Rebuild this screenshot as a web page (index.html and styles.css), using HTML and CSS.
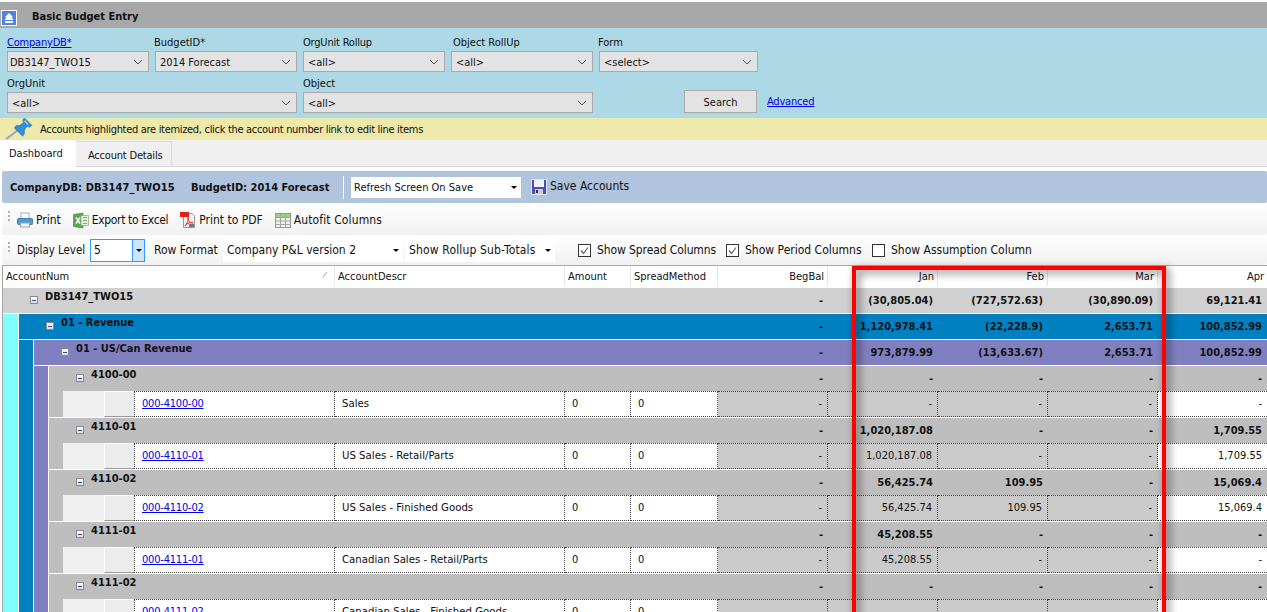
FILE: index.html
```html
<!DOCTYPE html>
<html lang="en">
<head>
<meta charset="utf-8">
<title>Basic Budget Entry</title>
<link rel="stylesheet" href="styles.css">
</head>
<body>
<div class="page">
  <header class="title-bar">
    <svg class="collapse-icon" width="16" height="16" viewBox="0 0 16 16"><rect x="0.5" y="0.5" width="15" height="15" fill="#4f83e3" stroke="#fff"/><path d="M8 3 L12 7 H10.5 L12.5 10 H3.5 L5.5 7 H4 Z M4 11 H12 V13 H4 Z" fill="#fff"/></svg>
    <h1 class="title">Basic Budget Entry</h1>
  </header>

  <section class="filters">
    <div class="field"><a class="field-label link tight" href="#">CompanyDB*</a><div class="select sel-first"><span>DB3147_TWO15</span><svg class="chev" width="10" height="6" viewBox="0 0 10 6"><path d="M1 1 L5 5 L9 1" fill="none" stroke="#555"/></svg></div></div>
    <div class="field"><span class="field-label lab-budget">BudgetID*</span><div class="select"><span>2014 Forecast</span><svg class="chev" width="10" height="6" viewBox="0 0 10 6"><path d="M1 1 L5 5 L9 1" fill="none" stroke="#555"/></svg></div></div>
    <div class="field"><span class="field-label tight">OrgUnit Rollup</span><div class="select"><span>&lt;all&gt;</span><svg class="chev" width="10" height="6" viewBox="0 0 10 6"><path d="M1 1 L5 5 L9 1" fill="none" stroke="#555"/></svg></div></div>
    <div class="field"><span class="field-label lab-object">Object RollUp</span><div class="select"><span>&lt;all&gt;</span><svg class="chev" width="10" height="6" viewBox="0 0 10 6"><path d="M1 1 L5 5 L9 1" fill="none" stroke="#555"/></svg></div></div>
    <div class="field"><span class="field-label lab-budget">Form</span><div class="select"><span>&lt;select&gt;</span><svg class="chev" width="10" height="6" viewBox="0 0 10 6"><path d="M1 1 L5 5 L9 1" fill="none" stroke="#555"/></svg></div></div>
    <div class="field span-2"><span class="field-label">OrgUnit</span><div class="select"><span>&lt;all&gt;</span><svg class="chev" width="10" height="6" viewBox="0 0 10 6"><path d="M1 1 L5 5 L9 1" fill="none" stroke="#555"/></svg></div></div>
    <div class="field span-2"><span class="field-label">Object</span><div class="select"><span>&lt;all&gt;</span><svg class="chev" width="10" height="6" viewBox="0 0 10 6"><path d="M1 1 L5 5 L9 1" fill="none" stroke="#555"/></svg></div></div>
    <div class="search-area"><button class="search-btn" type="button">Search</button><a class="link tight" href="#">Advanced</a></div>
  </section>

  <div class="notice">
    <svg class="pin" width="30" height="22" viewBox="0 0 30 24"><path d="M1 23 L14 13" stroke="#9aa4b0" stroke-width="2"/><path d="M10 11 L19 20 L21 17 C20 15 21 12 24 9 L27 10 L29 8 L21 0 L19 2 L20 5 C17 8 14 9 12 8 Z" fill="#2f8fd8" stroke="#1a6db0" stroke-width=".6"/><path d="M21 3 L25 7" stroke="#a9dcff" stroke-width="1.5"/></svg>
    <span>Accounts highlighted are itemized, click the account number link to edit line items</span>
  </div>

  <nav class="tabs">
    <span class="tab tab-active">Dashboard</span>
    <span class="tab">Account Details</span>
  </nav>

  <div class="context-bar">
    <strong class="ctx-company">CompanyDB: DB3147_TWO15</strong>
    <strong class="ctx-budget">BudgetID: 2014 Forecast</strong>
    <span class="ctx-sep"></span>
    <div class="ctx-select"><span>Refresh Screen On Save</span><i class="caret"></i></div>
    <svg class="save-icon" width="16" height="16" viewBox="0 0 16 16"><rect x="0.5" y="0.5" width="15" height="15" fill="#4a4fb8" stroke="#dfe6f2"/><rect x="3" y="1" width="10" height="7" fill="#eef2fb"/><rect x="4" y="10" width="8" height="5" fill="#c9cdd8"/><rect x="5" y="11" width="2" height="3" fill="#333"/></svg>
    <span class="save-label">Save Accounts</span>
  </div>

  <div class="toolbar toolbar-actions">
    <i class="grip"></i>
    <svg class="tool-icon i-print" width="16" height="16" viewBox="0 0 16 16"><rect x="4" y="1" width="8" height="6" fill="#fff" stroke="#9fb4c8"/><rect x="0.5" y="6.5" width="15" height="6" rx="1" fill="#4f9bd6" stroke="#3c7fb4"/><rect x="3.5" y="11" width="9" height="4" fill="#eef2f6" stroke="#9aa5ad"/></svg>
    <span class="tool-label">Print</span>
    <svg class="tool-icon i-excel" width="16" height="17" viewBox="0 0 16 16"><path d="M0.5 2 L10 0.5 V15.5 L0.5 14 Z" fill="#5fa354" stroke="#3f7f3a" stroke-width=".6"/><rect x="8" y="3" width="7.5" height="10" fill="#e8f3e4" stroke="#7cae72" stroke-width=".7"/><path d="M10 5 H14 M10 8 H14 M10 11 H14" stroke="#7cae72"/><path d="M3 5 L7 11 M7 5 L3 11" stroke="#fff" stroke-width="1.5"/></svg>
    <span class="tool-label lab-export">Export to Excel</span>
    <svg class="tool-icon i-pdf" width="16" height="16" viewBox="0 0 16 16"><path d="M3.5 1.5 H12 L14.5 4 V15.5 H3.5 Z" fill="#f4f4f4" stroke="#9a9a9a"/><rect x="0" y="0" width="9" height="5" fill="#e0241c"/><path d="M5 14 C8 10 9 6 8 5 C7 6 9 11 13 11 C11 10 7 11 5 14 Z" fill="none" stroke="#d8261c"/><rect x="9" y="12" width="5" height="3" fill="#777"/></svg>
    <span class="tool-label">Print to PDF</span>
    <svg class="tool-icon i-grid" width="16" height="16" viewBox="0 0 16 16"><rect x="0.5" y="1.5" width="15" height="14" fill="#f3f3e6" stroke="#8f9a9f"/><rect x="1" y="2" width="14" height="3" fill="#9bd07a"/><path d="M0.5 5.5 H15.5 M0.5 9 H15.5 M0.5 12.5 H15.5 M5.5 2 V15.5 M10.5 2 V15.5" stroke="#9aa7ad"/></svg>
    <span class="tool-label lab-autofit">Autofit Columns</span>
  </div>

  <div class="toolbar toolbar-options">
    <i class="grip"></i>
    <span class="opt-display">Display Level</span>
    <div class="combo"><span>5</span><b class="combo-btn"><i class="caret"></i></b></div>
    <span class="opt-format">Row Format</span>
    <div class="opt-select format-select"><span>Company P&amp;L version 2</span><i class="caret"></i></div>
    <div class="opt-select rollup-select"><span class="lab-rollup">Show Rollup Sub-Totals</span><i class="caret"></i></div>
    <label class="check check-spread"><svg class="box" width="13" height="13" viewBox="0 0 13 13"><rect x="0.5" y="0.5" width="12" height="12" fill="#fff" stroke="#333"/><path d="M3 6.5 L5.5 9.5 L10 3.5" fill="none" stroke="#666" stroke-width="1.2"/></svg>Show Spread Columns</label>
    <label class="check check-period"><svg class="box" width="13" height="13" viewBox="0 0 13 13"><rect x="0.5" y="0.5" width="12" height="12" fill="#fff" stroke="#333"/><path d="M3 6.5 L5.5 9.5 L10 3.5" fill="none" stroke="#666" stroke-width="1.2"/></svg>Show Period Columns</label>
    <label class="check check-assume"><svg class="box" width="13" height="13" viewBox="0 0 13 13"><rect x="0.5" y="0.5" width="12" height="12" fill="#fff" stroke="#333"/></svg>Show Assumption Column</label>
  </div>

  <section class="grid">
    <div class="head">
      <div class="hcell h-acct">AccountNum<svg class="sort" width="6" height="6" viewBox="0 0 6 6"><path d="M1 6 L5 1" stroke="#999"/></svg></div>
      <div class="hcell c-descr">AccountDescr</div>
      <div class="hcell c-amount">Amount</div>
      <div class="hcell c-spread">SpreadMethod</div>
      <div class="hcell c-num">BegBal</div>
      <div class="hcell c-num">Jan</div>
      <div class="hcell c-num">Feb</div>
      <div class="hcell c-num">Mar</div>
      <div class="hcell c-num c-last">Apr</div>
    </div>

    <div class="row sum root"><div class="label"><i class="tog"></i><b>DB3147_TWO15</b></div><div class="val c-num">-</div><div class="val c-num">(30,805.04)</div><div class="val c-num">(727,572.63)</div><div class="val c-num">(30,890.09)</div><div class="val c-num c-last">69,121.41</div></div>
    <div class="nest nest-cyan">
      <div class="row sum rev"><div class="label"><i class="tog"></i><b>01 - Revenue</b></div><div class="val c-num">-</div><div class="val c-num">1,120,978.41</div><div class="val c-num">(22,228.9)</div><div class="val c-num">2,653.71</div><div class="val c-num c-last">100,852.99</div></div>
      <div class="nest nest-blue">
        <div class="row sum usc"><div class="label"><i class="tog"></i><b>01 - US/Can Revenue</b></div><div class="val c-num">-</div><div class="val c-num">973,879.99</div><div class="val c-num">(13,633.67)</div><div class="val c-num">2,653.71</div><div class="val c-num c-last">100,852.99</div></div>
        <div class="nest nest-purple">
          <div class="rows">
            <div class="row group"><div class="label"><i class="tog"></i><b>4100-00</b></div><div class="val c-num">-</div><div class="val c-num">-</div><div class="val c-num">-</div><div class="val c-num">-</div><div class="val c-num c-last">-</div></div>
            <div class="row detail"><i class="stub"></i><i class="ind1"></i><i class="ind2"></i><div class="cell c-link"><a href="#">000-4100-00</a></div><div class="cell c-descr">Sales</div><div class="cell c-amount">0</div><div class="cell c-spread">0</div><div class="cell c-num dim">-</div><div class="cell c-num dim">-</div><div class="cell c-num dim">-</div><div class="cell c-num dim">-</div><div class="cell c-num c-last">-</div></div>

            <div class="row group"><div class="label"><i class="tog"></i><b>4110-01</b></div><div class="val c-num">-</div><div class="val c-num">1,020,187.08</div><div class="val c-num">-</div><div class="val c-num">-</div><div class="val c-num c-last">1,709.55</div></div>
            <div class="row detail"><i class="stub"></i><i class="ind1"></i><i class="ind2"></i><div class="cell c-link"><a href="#">000-4110-01</a></div><div class="cell c-descr">US Sales - Retail/Parts</div><div class="cell c-amount">0</div><div class="cell c-spread">0</div><div class="cell c-num dim">-</div><div class="cell c-num dim">1,020,187.08</div><div class="cell c-num dim">-</div><div class="cell c-num dim">-</div><div class="cell c-num c-last">1,709.55</div></div>

            <div class="row group"><div class="label"><i class="tog"></i><b>4110-02</b></div><div class="val c-num">-</div><div class="val c-num">56,425.74</div><div class="val c-num">109.95</div><div class="val c-num">-</div><div class="val c-num c-last">15,069.4</div></div>
            <div class="row detail"><i class="stub"></i><i class="ind1"></i><i class="ind2"></i><div class="cell c-link"><a href="#">000-4110-02</a></div><div class="cell c-descr">US Sales - Finished Goods</div><div class="cell c-amount">0</div><div class="cell c-spread">0</div><div class="cell c-num dim">-</div><div class="cell c-num dim">56,425.74</div><div class="cell c-num dim">109.95</div><div class="cell c-num dim">-</div><div class="cell c-num c-last">15,069.4</div></div>

            <div class="row group"><div class="label"><i class="tog"></i><b>4111-01</b></div><div class="val c-num">-</div><div class="val c-num">45,208.55</div><div class="val c-num">-</div><div class="val c-num">-</div><div class="val c-num c-last">-</div></div>
            <div class="row detail"><i class="stub"></i><i class="ind1"></i><i class="ind2"></i><div class="cell c-link"><a href="#">000-4111-01</a></div><div class="cell c-descr">Canadian Sales - Retail/Parts</div><div class="cell c-amount">0</div><div class="cell c-spread">0</div><div class="cell c-num dim">-</div><div class="cell c-num dim">45,208.55</div><div class="cell c-num dim">-</div><div class="cell c-num dim">-</div><div class="cell c-num c-last">-</div></div>

            <div class="row group"><div class="label"><i class="tog"></i><b>4111-02</b></div><div class="val c-num">-</div><div class="val c-num">-</div><div class="val c-num">-</div><div class="val c-num">-</div><div class="val c-num c-last">-</div></div>
            <div class="row detail"><i class="stub"></i><i class="ind1"></i><i class="ind2"></i><div class="cell c-link"><a href="#">000-4111-02</a></div><div class="cell c-descr">Canadian Sales - Finished Goods</div><div class="cell c-amount">0</div><div class="cell c-spread">0</div><div class="cell c-num dim">-</div><div class="cell c-num dim">-</div><div class="cell c-num dim">-</div><div class="cell c-num dim">-</div><div class="cell c-num c-last">-</div></div>
          </div>
        </div>
      </div>
    </div>
  </section>

  <div class="highlight-box"></div>
</div>
</body>
</html>
```

FILE: styles.css
```css
* { box-sizing: border-box; }
html, body { margin: 0; height: 100%; overflow: hidden; background: #fff; }
body { font: 11px/13px "DejaVu Sans Condensed", "DejaVu Sans", sans-serif; color: #111; }
.page { position: relative; height: 612px; padding-top: 2px; overflow: hidden; }
a { color: #0000ee; }

.title-bar { display: flex; align-items: center; height: 26px; background: #a8a8a8; padding-left: 1px; }
.collapse-icon { margin-top: 5px; }
.title { margin: 2px 0 0 15px; font-size: 11px; font-weight: bold; color: #111; }

.filters { display: grid; grid-template-columns: 142px 142px 142px 142px 159px; column-gap: 6px; row-gap: 5px; height: 90px; padding: 8px 0 5px 7px; background: #add8e6; }
.field { display: flex; flex-direction: column; }
.field-label { height: 15px; line-height: 13px; }
.tight { letter-spacing: -0.2px; }
.lab-budget { margin-left: -1px; }
.lab-object { margin-left: 2px; }
.link { color: #0000ee; text-decoration: underline; }
.span-2 { grid-column: span 2; }
.select { display: flex; align-items: center; justify-content: space-between; height: 21px; padding: 2px 5px 0 4px; background: #e3e3e3; border: 1px solid #a9a9a9; }
.sel-first { padding-left: 2px; }
.chev { flex: none; margin-top: -2px; }
.search-area { display: flex; align-items: flex-end; gap: 10px; padding-left: 85px; white-space: nowrap; }
.search-area .link { margin-bottom: 5px; }
.search-btn { flex: none; width: 73px; height: 23px; padding: 2px 0 0; margin-left: 0; font: inherit; color: #111; background: #e3e3e3; border: 1px solid #a9a9a9; }

.notice { display: flex; align-items: center; height: 22px; background: #eee8aa; padding-left: 4px; letter-spacing: -0.31px; }
.pin { flex: none; margin: 0 6px 0 0; }

.tabs { display: flex; align-items: flex-end; height: 27px; background: #f0f0f0; border-bottom: 1px solid #d9d9d9; }
.tab { display: flex; align-items: center; height: 25px; padding: 2px 0 0 12px; width: 96px; white-space: nowrap; letter-spacing: -0.2px; border: 1px solid #d9d9d9; border-bottom: 0; border-left: 0; }
.tab-active { width: 76px; height: 27px; padding: 0 0 0 9px; margin-bottom: -1px; background: #fff; border: 0; letter-spacing: 0; }

.context-bar { display: flex; align-items: center; height: 32px; margin: 4px 0 0 2px; background: #b0c4de; border-radius: 2px; padding-left: 8px; }
.ctx-company { width: 181px; letter-spacing: 0.08px; white-space: nowrap; }
.ctx-budget { width: 152px; white-space: nowrap; }
.ctx-sep { width: 1px; height: 23px; background: #fff; }
.ctx-select { display: flex; align-items: center; justify-content: space-between; width: 170px; height: 21px; margin-left: 7px; padding: 0 4px 0 3px; background: #fff; }
.caret { display: block; width: 0; height: 0; border: 3px solid transparent; border-top: 3px solid #000; border-bottom: 0; }
.save-icon { margin-left: 10px; flex: none; }
.save-label { margin-left: 3px; margin-top: -2px; font-size: 12px; }

.toolbar { display: flex; align-items: center; margin-left: 2px; border-radius: 3px; background: linear-gradient(#ffffff, #f1f1f1); font-size: 12px; }
.toolbar-actions { height: 32px; padding-top: 2px; }
.toolbar-options { height: 29px; margin-top: 1px; }
.grip { display: block; flex: none; width: 2px; height: 12px; margin: -6px 0 0 6px; background: repeating-linear-gradient(#b5b5b5 0 2px, transparent 2px 4px); }
.tool-icon { flex: none; }
.tool-label { margin-left: 3px; white-space: nowrap; }
.lab-export { letter-spacing: -0.35px; }
.lab-autofit { letter-spacing: 0.12px; }
.i-print { margin-left: 7px; }
.i-excel { margin-left: 12px; }
.i-pdf { margin-left: 12px; }
.i-grid { margin-left: 12px; }

.opt-display { margin-left: 7px; width: 73px; white-space: nowrap; font-size: 11.4px; }
.combo { display: flex; align-items: center; justify-content: space-between; width: 55px; height: 23px; padding-left: 3px; background: #fff; border: 1px solid #3399ff; }
.combo-btn { display: flex; align-items: center; justify-content: center; width: 12px; height: 21px; background: #cce4ff; border-left: 1px solid #3399ff; }
.opt-format { margin-left: 9px; width: 69px; white-space: nowrap; }
.opt-select { display: flex; align-items: center; justify-content: space-between; height: 23px; padding: 0 4px 0 4px; background: #fff; }
.format-select { width: 180px; }
.rollup-select { width: 150px; margin-left: 2px; }
.lab-rollup { letter-spacing: 0.15px; }
.check { display: flex; align-items: center; white-space: nowrap; }
.box { flex: none; margin-right: 6px; }
.check-spread { margin-left: 23px; width: 148px; letter-spacing: -0.1px; }
.check-period { width: 146px; }

.grid { margin-left: 2px; border-left: 1px solid #a6a6a6; border-top: 1px solid #a6a6a6; }
.head { display: flex; height: 22px; background: #fff; }
.hcell { display: flex; align-items: center; padding: 0 3px; border-right: 1px solid #e6e6e6; white-space: nowrap; height: 20px; }
.h-acct { flex: 1; justify-content: space-between; padding-right: 6px; }
.sort { margin-bottom: 4px; }
.c-descr { flex: none; width: 230px; }
.c-amount { flex: none; width: 66px; }
.c-spread { flex: none; width: 87px; }
.c-num { flex: none; width: 110px; justify-content: flex-end; text-align: right; }
.c-last { width: 109px; border-right: 0; }

.row { display: flex; white-space: nowrap; }
.sum { height: 26px; border-bottom: 1px solid #fff; }
.root { background: #d0d0d0; }
.rev { background: #0080c0; border-left: 1px solid #fff; }
.usc { background: #8080c0; border-left: 1px solid #fff; }
.group { height: 25px; background: #bebebe; }
.label { display: flex; flex: 1; min-width: 0; padding: 2px 0 0 27px; }
.label b { margin-left: 7px; }
.tog { display: block; flex: none; width: 8px; height: 8px; margin-top: 6px; border: 1px solid #8a8a8a; background: linear-gradient(#fff, #dcdcdc) ; position: relative; }
.tog::after { content: ""; position: absolute; left: 1px; right: 1px; top: 3px; height: 1px; background: #3a4a9a; }
.val { display: flex; align-items: center; padding-right: 5px; font-weight: bold; color: #111; }

.nest { border-left: 1px solid #fff; padding-left: 14px; }
.nest-cyan { background: #80ffff; padding-left: 15px; border-left: 0; }
.nest-blue { background: #0080c0; }
.nest-purple { background: #8080c0; }
.rows { border-left: 1px solid #fff; }

.detail { height: 27px; background: #bebebe; border-bottom: 1px solid #fff; }
.stub { display: block; flex: none; width: 14px; }
.ind1 { display: block; flex: none; width: 41px; background: #f0f0f0; }
.ind2 { display: block; flex: none; width: 30px; background: #ececec; border-left: 1px solid #fff; border-bottom: 1px solid #999; border-top: 1px solid #fff; }
.cell { display: flex; align-items: center; background: #fff; border-top: 1px dotted #444; border-bottom: 1px dotted #444; border-right: 1px dotted #444; padding: 0 5px 2px 7px; }
.c-link { flex: 1; min-width: 0; border-left: 1px dotted #444; letter-spacing: -0.2px; }
.cell.c-descr { font-size: 11.3px; }
.dim { background: #cbcbcb; }
.cell.c-last { border-right: 0; }

.highlight-box { position: absolute; left: 852px; top: 266px; width: 314px; height: 400px; border: 4px solid #ff0000; filter: drop-shadow(3px 3px 4px rgba(0, 0, 0, 0.6)); }
```
